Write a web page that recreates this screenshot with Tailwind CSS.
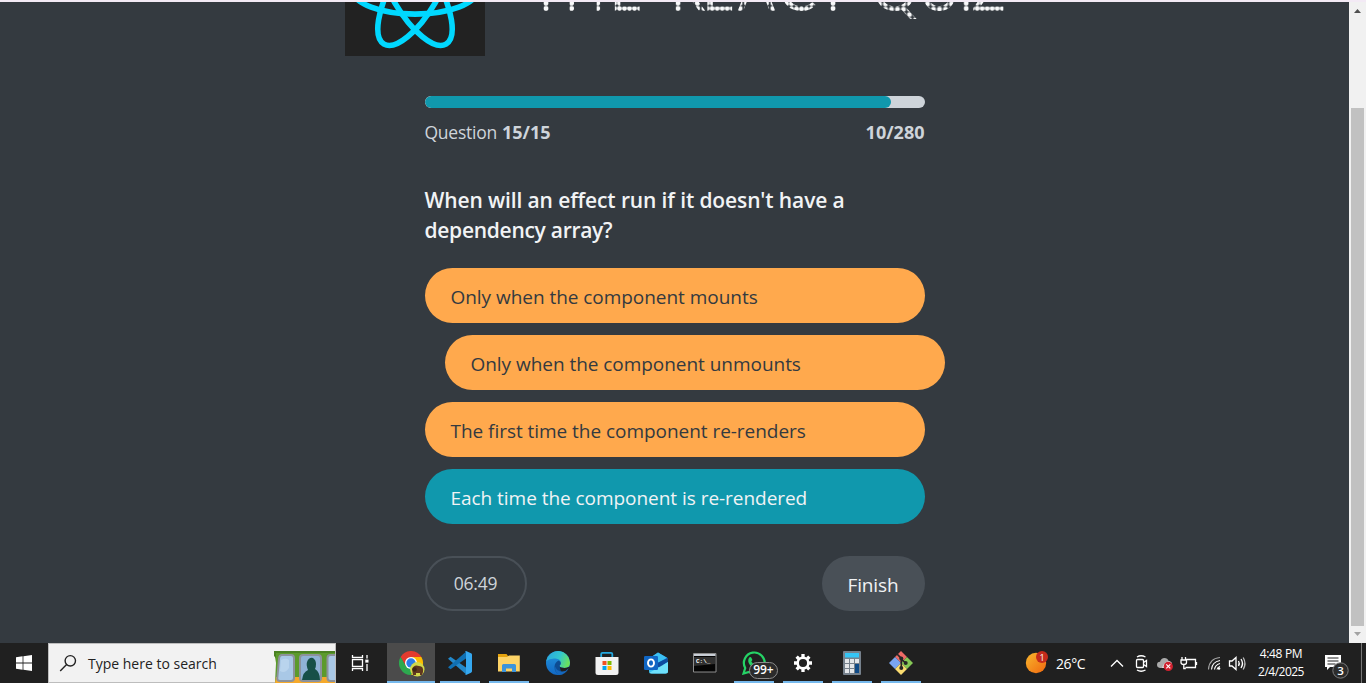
<!DOCTYPE html>
<html lang="en">
<head>
<meta charset="utf-8">
<title>The React Quiz</title>
<script src="https://cdn.jsdelivr.net/npm/@tailwindcss/browser@4"></script>
</head>
<body class="w-[1366px] h-[683px] overflow-hidden flex flex-col bg-[#343a40] font-['Open_Sans','Noto_Sans',sans-serif]">
<div class="h-[2px] shrink-0 bg-[#f3eaf5]"></div>
<div class="flex h-[641px] shrink-0">
  <main class="w-[1349px] flex flex-col items-center bg-[#343a40] text-[#ced4da]">
    <header class="w-[1349px] h-[54px] overflow-hidden">
      <svg class="block" width="1349" height="54" viewBox="0 2 1349 54">
        <defs>
          <!-- dotted fills for the display heading, phased to the stems of each letter -->
          <pattern id="dT" width="8" height="5.3" patternUnits="userSpaceOnUse" patternTransform="translate(542 5.7)"><circle cx="4" cy="2.65" r="2.5" fill="#f8f9fa"/></pattern>
          <pattern id="dH" width="8.7" height="5.3" patternUnits="userSpaceOnUse" patternTransform="translate(567.2 5.7)"><circle cx="4.35" cy="2.65" r="2.5" fill="#f8f9fa"/></pattern>
          <pattern id="dE" width="5" height="5.3" patternUnits="userSpaceOnUse" patternTransform="translate(612 5.7)"><circle cx="2.5" cy="2.65" r="2.35" fill="#f8f9fa"/></pattern>
          <pattern id="dR" width="6.5" height="5.3" patternUnits="userSpaceOnUse" patternTransform="translate(668.2 5.7)"><circle cx="3.25" cy="2.65" r="2.5" fill="#f8f9fa"/></pattern>
          <pattern id="dF" width="5" height="5.3" patternUnits="userSpaceOnUse" patternTransform="translate(704.7 5.7)"><circle cx="2.5" cy="2.65" r="2.35" fill="#f8f9fa"/></pattern>
          <pattern id="dA" width="6.6" height="5.3" patternUnits="userSpaceOnUse" patternTransform="translate(736.7 5.7)"><circle cx="3.3" cy="2.65" r="2.5" fill="#f8f9fa"/></pattern>
          <pattern id="dC" width="5" height="5.3" patternUnits="userSpaceOnUse" patternTransform="translate(794 6.3)"><circle cx="2.5" cy="2.65" r="2.35" fill="#f8f9fa"/></pattern>
          <pattern id="dS" width="8" height="5.3" patternUnits="userSpaceOnUse" patternTransform="translate(829 5.7)"><circle cx="4" cy="2.65" r="2.5" fill="#f8f9fa"/></pattern>
          <pattern id="dQ" width="6" height="5.3" patternUnits="userSpaceOnUse" patternTransform="translate(888.5 6.6)"><circle cx="3" cy="2.65" r="2.4" fill="#f8f9fa"/></pattern>
          <pattern id="dI" width="8" height="5.3" patternUnits="userSpaceOnUse" patternTransform="translate(962.2 5.7)"><circle cx="4" cy="2.65" r="2.5" fill="#f8f9fa"/></pattern>
        </defs>
        <rect x="345" y="-84" width="140" height="140" fill="#222"/>
        <g fill="none" stroke="#00d8ff" stroke-width="5.6" transform="translate(415 -9.6)">
          <ellipse rx="62" ry="23.7"/>
          <ellipse rx="62" ry="23.7" transform="rotate(60)"/>
          <ellipse rx="62" ry="23.7" transform="rotate(120)"/>
        </g>
        <text y="10.8" font-family="Lato" font-size="56" text-anchor="middle" x="546 586 626 650 688 718.5 756.5 798 833 860 895 939 966 988.5"><tspan fill="url(#dT)">T</tspan><tspan fill="url(#dH)">H</tspan><tspan fill="url(#dE)">E </tspan><tspan fill="url(#dR)">R</tspan><tspan fill="url(#dF)">E</tspan><tspan fill="url(#dA)">A</tspan><tspan fill="url(#dC)">C</tspan><tspan fill="url(#dS)">T </tspan><tspan fill="url(#dQ)">QU</tspan><tspan fill="url(#dI)">I</tspan><tspan fill="url(#dF)">Z</tspan></text>
      </svg>
    </header>
    <section class="w-[500px] mt-10 flex flex-col">
      <div class="h-3 rounded-full bg-[#ced4da] overflow-hidden"><div class="h-3 w-[466px] rounded-full bg-[#1098ad]"></div></div>
      <div class="mt-[10px] h-7 flex justify-between text-[18px] leading-7">
        <p class="flex gap-[5px]"><span class="text-[17.5px] tracking-[-0.25px]">Question</span><b>15/15</b></p><b>10/280</b>
      </div>
      <h1 class="mt-[39px] text-[21px] leading-[30px] font-semibold text-[#f1f3f5] whitespace-nowrap"><span class="tracking-[-0.12px]">When will an effect run if it doesn't have a</span><br><span class="tracking-[-0.28px]">dependency array?</span></h1>
      <div class="mt-[23px] flex flex-col gap-3 text-[19px] tracking-[-0.04px] text-[#343a40]">
        <div class="h-[55px] rounded-full bg-[#ffa94d] flex items-center pl-[26px] pt-[3px]">Only when the component mounts</div>
        <div class="h-[55px] rounded-full bg-[#ffa94d] flex items-center pl-[26px] pt-[3px] translate-x-5">Only when the component unmounts</div>
        <div class="h-[55px] rounded-full bg-[#ffa94d] flex items-center pl-[26px] pt-[3px]">The first time the component re-renders</div>
        <div class="h-[55px] rounded-full bg-[#1098ad] text-[#f1f3f5] flex items-center pl-[26px] pt-[3px]">Each time the component is re-rendered</div>
      </div>
      <div class="mt-8 flex justify-between">
        <div class="w-[102px] h-[55px] rounded-full border-2 border-[#495057] flex items-center justify-center text-[17.5px] tracking-[-0.25px]">06:49</div>
        <div class="w-[103px] h-[55px] rounded-full bg-[#495057] text-[#f1f3f5] flex items-center justify-center pt-[3px] text-[19px] tracking-[-0.15px]">Finish</div>
      </div>
    </section>
  </main>
  <aside class="w-[17px] bg-[#f1f1f1] flex flex-col pl-[2px]">
    <svg class="block h-[106px] w-[13px]" viewBox="0 2 13 106"><path d="M3 13 6.5 9 10 13z" fill="#505050"/></svg>
    <div class="h-[518px] w-[13px] bg-[#c1c1c1]"></div>
    <svg class="block h-[17px] w-[13px]" viewBox="0 626 13 17"><path d="M3 632 6.5 636 10 632z" fill="#a3a3a3"/></svg>
  </aside>
</div>
<footer class="h-10 shrink-0 bg-[#202020] flex text-white">
  <div class="w-12 flex items-center justify-center">
    <svg width="16" height="16" viewBox="0 0 16 16" fill="#fff"><path d="M0 2.2 6.6 1.3v6.3H0zM7.4 1.2 16 0v7.6H7.4zM0 8.4h6.6v6.3L0 13.8zM7.4 8.4H16V16l-8.6-1.2z"/></svg>
  </div>
  <div class="w-[288px] bg-[#f2f2f2] border border-[#bdbdbd] flex items-center text-[#222]">
    <svg class="ml-[10px] mr-3" width="18" height="18" viewBox="0 0 18 18" fill="none" stroke="#222" stroke-width="1.4"><circle cx="11.3" cy="6.8" r="5.2"/><path d="M7.6 10.6 1.2 17"/></svg>
    <span class="w-[186px] -ml-px pt-px text-[14px] whitespace-nowrap">Type here to search</span>
    <svg class="block shrink-0" width="61" height="40" viewBox="274 643 61 40">
      <path d="M274 651h62v32h-61l1-20z" fill="#5c9a2c"/><path d="M274 651h62v2h-60v5l-2-2z" fill="#4a8123"/><path d="M276 677h60v6h-61z" fill="#f5a92b"/>
      <g stroke="#8c929b" stroke-width="2">
        <path d="M282 655h9q3 0 3 3v20q0 3-3 3h-11q-3 0-2.700-3l1.700-19q.3-4 3-4z" fill="#a9c8e6"/>
        <rect x="300" y="655" width="21" height="26" rx="3" fill="#8fb2d5"/>
        <rect x="327.500" y="655" width="16" height="26" rx="3" fill="#a9c8e6"/>
      </g>
      <path d="M302 680q1-8 6-10-2-5-1-8 2-5 6-4 3 2 3 6 0 3-1 5 5 3 5 11z" fill="#175047"/>
      <path d="M281 660q5-3 8 0v8q-4 6-9 3z" fill="#c4dcf1" opacity=".6"/>
    </svg>
  </div>
  <div class="w-[51px] flex items-center justify-center pr-[3px]">
    <svg width="18" height="16" viewBox="0 0 18 16" fill="none" stroke="#fff" stroke-width="1.300"><path d="M1.500 0v2.500h10V0M1.500 16v-2.500h10V16M1.500 4.700h10v6.600h-10zM16 0v3.500M16 9v7"/><path d="M14.300 4.600h3.200v3h-3.200z" fill="#fff" stroke="none"/></svg>
  </div>
  <nav class="flex gap-px">
    <div class="w-12 bg-[#4b4b4b] border-b-2 border-[#76b9ed] flex justify-center pt-2 pl-[2px]">
      <svg width="26" height="26" viewBox="-12 -12 26 26"><path d="M-10.400-6A12 12 0 0 1 10.400-6H0L-5.200 3z" fill="#e33b2e"/><path d="M-10.400-6A12 12 0 0 0 0 12L5.200 3-5.200 3z" fill="#2da94f"/><path d="M10.400-6A12 12 0 0 1 0 12L5.200 3 0-6z" fill="#fdbd00"/><circle r="6" fill="#fff"/><circle r="4.700" fill="#2b7de9"/><circle cx="6.300" cy="6.300" r="7.200" fill="#d2d84a"/><path d="M1 6q2-5 7-3 5 0 4 6l-1 3H9v-2H5v2H2z" fill="#60371f"/><circle cx="3.600" cy="6.500" r="2.200" fill="#3f2516"/></svg>
    </div>
    <div class="w-12 px-1"><div class="h-10 border-b-2 border-[#76b9ed] flex justify-center pt-2">
      <svg width="24" height="24" viewBox="0 0 24 24"><path d="M0 7.800 2.500 5.800 18 16.500v6.800z" fill="#2489ca"/><path d="M0 16.200 2.500 18.200 18 7.500V.7z" fill="#1070b3"/><path d="M17 .4 18 0l5 2.300q1 .5 1 1.400v16.600q0 .9-1 1.400L18 24l-1-.4q1-.2 1-1.400V1.800Q18 .6 17 .4z" fill="#35a8f0"/></svg>
    </div></div>
    <div class="w-12 px-1"><div class="h-10 border-b-2 border-[#76b9ed] flex justify-center pt-2">
      <svg width="24" height="24" viewBox="0 0 24 24"><path d="M1 3h8.500L11 5h11v15H1z" fill="#e5a30e"/><path d="M1 6h9l2-1.500h10.800V20.500H1z" fill="#fdd366"/><path d="M5 21v-6.500q0-1.500 1.500-1.500h11q1.500 0 1.500 1.500V21h-4v-3.500H9V21z" fill="#3c94dc"/></svg>
    </div></div>
    <div class="w-12 flex justify-center pt-2">
      <svg width="24" height="24" viewBox="0 0 24 24"><defs><linearGradient id="eg" x1="0" x2="1" y1=".2" y2=".5"><stop stop-color="#2aa7df"/><stop offset=".55" stop-color="#32c6cf"/><stop offset="1" stop-color="#6be35a"/></linearGradient><linearGradient id="eb" x1="0" x2="0" y1="0" y2="1"><stop stop-color="#2296dd"/><stop offset="1" stop-color="#1268c4"/></linearGradient></defs><circle cx="12" cy="12" r="12" fill="url(#eb)"/><path d="M.2 10A12 12 0 0 1 24 11.500q0 5.500-5.500 5.500-5 0-5-2.200 1.300-1 1.300-3Q14.500 8 9.500 7.500 4 7 .2 10z" fill="url(#eg)"/><path d="M13.500 14.800q0 2.200 5 2.200 2 0 4-.8.600.2.200 1A12 12 0 0 1 14 23.800Q8.500 22 8.500 16q0-4.500 4-6.500 2.500 1 2.300 2.800 0 1.200-1.300 2.500z" fill="#0d4c92"/><path d="M13.500 14.800q0 2.200 5 2.200 2.500 0 4.600-1.300l1.600 2-5 6-4-.300z" fill="#202020"/><path d="M22.700 17.200A12 12 0 0 1 13 24Q8 21 9.500 15.500q1 5 7 5 3.500 0 6.200-3.300z" fill="#1567bd"/></svg>
    </div>
    <div class="w-12 flex justify-center pt-2">
      <svg width="24" height="25" viewBox="0 0 24 25"><path d="M6.200 6V3Q6.200 1.800 7.500 1.800h8.500Q17.300 1.800 17.300 3v3" fill="none" stroke="#25a9e0" stroke-width="1.800"/><path d="M.5 6h23v15.500q0 2.500-2.500 2.500H3Q.5 24 .5 21.500z" fill="#f2f2f2"/><path d="M7.500 10h4v4h-4z" fill="#f25022"/><path d="M12.500 10h4v4h-4z" fill="#7fba00"/><path d="M7.500 15h4v4h-4z" fill="#00a4ef"/><path d="M12.500 15h4v4h-4z" fill="#ffb900"/></svg>
    </div>
    <div class="w-12 flex justify-center pt-2">
      <svg width="24" height="24" viewBox="0 0 24 24"><path d="M5 7.500 14 1.500l9.500 5.500V14H5z" fill="#1a85d8"/><path d="M8 5.500 14 1.500l9 5.300-10 6z" fill="#3cc0f2"/><path d="M11 13 23.500 7v4L13 18z" fill="#0d4ba0"/><path d="M5 12l11 5 8-6v9q0 2.500-2.500 2.500H7.500Q5 22.500 5 20z" fill="#35c0f3"/><path d="M5 22 24 11v9q0 2.500-2.500 2.500H7.500z" fill="#6ee0fb"/><rect x="0" y="5" width="14" height="14" rx="1.200" fill="#1066c4"/><ellipse cx="7" cy="12" rx="3" ry="3.600" fill="none" stroke="#fff" stroke-width="1.900"/></svg>
    </div>
    <div class="w-12 flex justify-center pt-[10px]">
      <svg width="24" height="20" viewBox="0 0 24 20"><path d="M.5.5h22.500v18.500H.5z" fill="#050505" stroke="#8d8d8d"/><path d="M1 1h21.500v2H1z" fill="#c9ced6"/><path d="M1 4h21v7L1 13z" fill="#303030"/><text x="3" y="9.500" font-family="Liberation Mono" font-size="6" font-weight="700" fill="#fff">C:\_</text></svg>
    </div>
    <div class="w-12 px-1"><div class="relative h-10 border-b-2 border-[#76b9ed] flex justify-center pt-2">
      <svg width="24" height="24" viewBox="0 0 24 24"><path d="M1.500 22.500 3.200 17A10.400 10.400 0 1 1 7 20.900z" fill="#202020" stroke="#25d366" stroke-width="2.200"/><path d="M7.200 6.500q1.500-1.200 2.200.3l.9 2q.2.600-1 1.800 1.500 2.700 4 3.600 1-1.600 1.700-1.300l2.500 1.300q0 3-3 3.300-3.500 0-6.600-3.500-3-3.800-.7-7.500z" fill="#25d366"/></svg>
      <span class="absolute left-[15px] top-[19px] w-[29px] h-[17px] rounded-full border border-[#8a8a8a] bg-[#2b2b2b] text-[12px] tracking-[-0.1px] leading-[13px] font-semibold text-center">99+</span>
    </div></div>
    <div class="w-12 px-1"><div class="h-10 border-b-2 border-[#76b9ed] flex justify-center pt-[11px]">
      <svg width="18" height="18" viewBox="-9 -9 18 18" fill="none" stroke="#fff"><circle r="5.300" stroke-width="2.500"/><g stroke-width="3.300"><path d="M0-9v3M0 6v3M-9 0h3M6 0h3"/><path d="M0-9v3M0 6v3M-9 0h3M6 0h3" transform="rotate(45)"/></g></svg>
    </div></div>
    <div class="w-12 px-1"><div class="h-10 border-b-2 border-[#76b9ed] flex justify-center pt-2">
      <svg width="18" height="24" viewBox="0 0 18 24"><rect width="18" height="24" rx="1" fill="#76818c"/><path d="M2 2h14v4.500H2z" fill="#35c5f5"/><path d="M2 8h4v4H2zM7 8h4v4H7zM12 8h4v4h-4zM2 13h4v4H2zM7 13h4v4H7zM2 18h4v4H2zM7 18h4v4H7z" fill="#e3e6e9"/><path d="M12 13h4v9h-4z" fill="#0f4a86"/></svg>
    </div></div>
    <div class="w-12 px-1"><div class="h-10 border-b-2 border-[#76b9ed] flex justify-center pt-2">
      <svg width="24" height="24" viewBox="0 0 24 24"><path d="M12 0l6 6-6 6-6-6z" fill="#ee6b66"/><path d="M6 6l6 6-6 6-6-6z" fill="#7aa5f0"/><path d="M18 6l6 6-6 6-6-6z" fill="#86c856"/><path d="M12 12l6 6-6 6-6-6z" fill="#fbdc70"/><path d="M7.500 2.500 12.300 7.300V17M12.300 8l4.200 4" stroke="#262626" stroke-width="1.700" fill="none"/><g fill="#262626"><circle cx="12.300" cy="7.500" r="2"/><circle cx="12.300" cy="17" r="2"/><circle cx="16.700" cy="12" r="2"/></g></svg>
    </div></div>
  </nav>
  <div class="ml-[100px] flex items-center">
    <svg width="24" height="24" viewBox="1025 651 24 24"><defs><linearGradient id="sun" x1="0" y1="0" x2="1" y2="1"><stop stop-color="#f8b62d"/><stop offset="1" stop-color="#f0680f"/></linearGradient></defs><circle cx="1036" cy="663" r="10.200" fill="url(#sun)"/><circle cx="1042" cy="657" r="6" fill="#c42b1c"/><text x="1042" y="660.500" text-anchor="middle" font-family="Open Sans" font-size="9" fill="#fff">1</text></svg>
    <span class="ml-[7px] w-[30px] text-[14px] tracking-[-0.4px] whitespace-nowrap">26°C</span>
    <svg class="block" width="164" height="40" viewBox="1086 643 164 40" fill="none" stroke="#fff" stroke-width="1.300">
      <path d="M1111 666.500l6-6 6 6"/>
      <rect x="1136.500" y="659.500" width="7" height="8" rx="1"/><path d="M1143.500 662.500l3-2v6l-3-2M1137 657q4-2.500 8.500 0M1137 670q4 2.500 8.500 0"/>
      <path d="M1160 668q-3-.5-3-3.200 0-2.800 3-3 1-3.800 4.500-3.800 3 0 4.200 3 3.300.5 3.300 3.500 0 3-3 3.500z" fill="#aaa" stroke="none"/><path d="M1162 668q1-5 6.500-7 3.500.5 3.500 3.500 0 3-3 3.500z" fill="#ddd" stroke="none"/>
      <circle cx="1168.300" cy="666.400" r="4.600" fill="#d0212f" stroke="none"/><path d="M1166.300 664.400l4 4M1170.300 664.400l-4 4" stroke-width="1.100"/>
      <path d="M1186 659.500h9.500v8h-10M1196.500 662v3M1182 657v3M1185.500 657v3M1181 660h5.500v2.500q0 2-2.700 2t-2.800-2zM1183.800 664.500v4h2"/>
      <g stroke-width="1.100"><path d="M1208.500 669.500Q1209 658.500 1220 657.500" opacity=".6"/><path d="M1211.500 669.500Q1212 662 1220 660.500M1214.500 669.500Q1215 665 1220 663.500M1217 669.500q.5-2.500 3-3"/></g><circle cx="1219" cy="668.500" r="1.300" fill="#fff" stroke="none"/>
      <path d="M1229.500 661h2.500l4-3.500v12l-4-3.500h-2.500zM1238.500 661q1.500 2.500 0 5M1241 659q3 4.500 0 9"/><path d="M1243.200 657.500q3.500 6 0 12" opacity=".7"/>
    </svg>
    <div class="w-[62px] text-center text-[12px] leading-[18px] whitespace-nowrap pt-[2px] h-10"><div class="tracking-[-0.35px]">4:48 PM</div><div class="tracking-[-0.5px]">2/4/2025</div></div>
    <svg class="block" width="54" height="40" viewBox="1312 643 54 40"><path d="M1325 655h16v12h-11l-3 3v-3h-2z" fill="#fff"/><path d="M1327.500 658h11M1327.500 661h11M1327.500 664h8" stroke="#202020" stroke-width="1"/><circle cx="1340.500" cy="670.500" r="7.700" fill="#2c2c2c" stroke="#7d7d7d"/><text x="1340.500" y="674.500" text-anchor="middle" font-family="Open Sans" font-size="11.5" font-weight="600" fill="#fff">3</text><path d="M1361.500 643v40" stroke="#777"/></svg>
  </div>
</footer>
</body>
</html>
